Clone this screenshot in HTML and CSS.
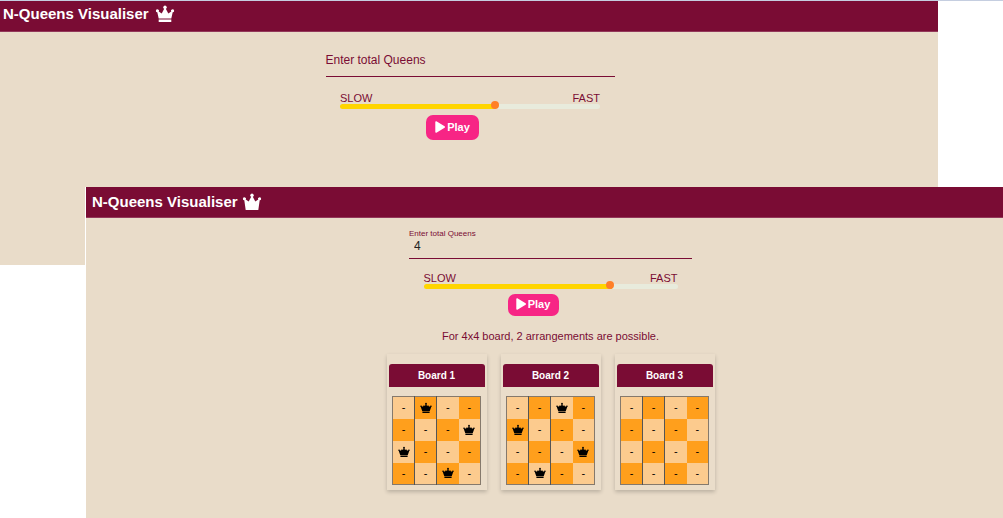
FILE: index.html
```html
<!DOCTYPE html>
<html lang="en">
<head>
<meta charset="utf-8">
<title>N-Queens Visualiser</title>
<link rel="stylesheet" href="styles.css">
</head>
<body>
<svg class="symbols" aria-hidden="true">
  <symbol id="crown" viewBox="0 0 20 18">
    <path d="M3.7 13.6 2.3 7.3a1.5 1.5 0 1 1 1.4-.7l3 1.8 2.5-4.6a1.7 1.7 0 1 1 1.6 0l2.5 4.6 3-1.8a1.5 1.5 0 1 1 1.4.7l-1.4 6.3zM3.7 14.6h12.6v2.3H3.7z"/>
  </symbol>
  <symbol id="crown-solid" viewBox="0 0 20 18">
    <path d="M3.7 16.9 2.3 7.3a1.5 1.5 0 1 1 1.4-.7l3 1.8 2.5-4.6a1.7 1.7 0 1 1 1.6 0l2.5 4.6 3-1.8a1.5 1.5 0 1 1 1.4.7l-1.4 9.6z"/>
  </symbol>
  <symbol id="queen" viewBox="0 0 12 12">
    <path d="M2.2 8.9.8 5a.8.8 0 1 1 1-.6L3 4.6l.8-1.4 1.3.7.3-1.6a.9.9 0 1 1 1.2 0l.3 1.6 1.3-.7L9 4.6l1.2-.2a.8.8 0 1 1 1 .6L9.8 8.9zM2.4 9.5h7.2V11H2.4z"/>
  </symbol>
  <symbol id="play" viewBox="0 0 10 12"><path d="M.3 1c0-.7.6-1 1.1-.7l8.2 5c.5.3.5 1.1 0 1.4l-8.2 5c-.5.3-1.1 0-1.1-.7z"/></symbol>
</svg>
<div class="stage">
  <section class="window window-back">
    <header class="bar"><h1>N-Queens Visualiser</h1><svg class="crown"><use href="#crown"/></svg></header>
    <main class="content">
      <div class="field">
        <label for="total-a">Enter total Queens</label>
        <input id="total-a" type="text">
      </div>
      <div class="speed">
        <div class="ends"><label for="speed-a">SLOW</label><span>FAST</span></div>
        <input id="speed-a" type="range" min="0" max="100" value="60" style="--fill:60%">
      </div>
      <button class="play" type="button"><svg><use href="#play"/></svg>Play</button>
    </main>
  </section>
  <section class="window window-front">
    <header class="bar"><h1>N-Queens Visualiser</h1><svg class="crown"><use href="#crown-solid"/></svg></header>
    <main class="content">
      <div class="field filled">
        <label for="total-b">Enter total Queens</label>
        <input id="total-b" type="text" value="4">
      </div>
      <div class="speed">
        <div class="ends"><label for="speed-b">SLOW</label><span>FAST</span></div>
        <input id="speed-b" type="range" min="0" max="100" value="74" style="--fill:74%">
      </div>
      <button class="play" type="button"><svg><use href="#play"/></svg>Play</button>
      <p class="message">For 4x4 board, 2 arrangements are possible.</p>
      <div class="boards">
        <article class="card"><h2>Board 1</h2>
          <table>
            <tr><td>-</td><td><svg><use href="#queen"/></svg></td><td>-</td><td>-</td></tr>
            <tr><td>-</td><td>-</td><td>-</td><td><svg><use href="#queen"/></svg></td></tr>
            <tr><td><svg><use href="#queen"/></svg></td><td>-</td><td>-</td><td>-</td></tr>
            <tr><td>-</td><td>-</td><td><svg><use href="#queen"/></svg></td><td>-</td></tr>
          </table>
        </article>
        <article class="card"><h2>Board 2</h2>
          <table>
            <tr><td>-</td><td>-</td><td><svg><use href="#queen"/></svg></td><td>-</td></tr>
            <tr><td><svg><use href="#queen"/></svg></td><td>-</td><td>-</td><td>-</td></tr>
            <tr><td>-</td><td>-</td><td>-</td><td><svg><use href="#queen"/></svg></td></tr>
            <tr><td>-</td><td><svg><use href="#queen"/></svg></td><td>-</td><td>-</td></tr>
          </table>
        </article>
        <article class="card"><h2>Board 3</h2>
          <table>
            <tr><td>-</td><td>-</td><td>-</td><td>-</td></tr>
            <tr><td>-</td><td>-</td><td>-</td><td>-</td></tr>
            <tr><td>-</td><td>-</td><td>-</td><td>-</td></tr>
            <tr><td>-</td><td>-</td><td>-</td><td>-</td></tr>
          </table>
        </article>
      </div>
    </main>
  </section>
</div>
</body>
</html>
```
FILE: styles.css
```css
* { box-sizing: border-box; }
body {
  margin: 0;
  background: #fff;
  color: #7a0c34;
  font-family: "Liberation Sans", Arial, sans-serif;
}
h1, h2, p { margin: 0; }
svg { fill: currentColor; }
.symbols { position: absolute; width: 0; height: 0; }

/* Two overlapping windows share one grid cell */
.stage {
  display: grid;
  min-height: 100vh;
  border-top: 1px solid #c5cee0;
}
.window { grid-area: 1 / 1; background: #e9dcc9; }
.window-back { margin-right: 65px; min-height: 264px; align-self: start; }
.window-front {
  margin: 186px 0 0 85px;
  border-left: 1px solid #fff;
}

.bar {
  display: flex;
  align-items: center;
  gap: 6px;
  height: 31px;
  padding: 0 3px 4px;
  background: #7a0c34;
  border-bottom: 1px solid #93385a;
  color: #fff;
}
.bar h1 { font-size: 15px; line-height: 20px; }
.crown { width: 20px; height: 18px; }
.window-front .bar { gap: 4px; padding: 0 6px 1px; }

.content {
  display: flex;
  flex-direction: column;
  align-items: center;
  padding: 11px 0 28px 2px;
}
.window-front .content { padding: 9px 0 28px 12px; }

.field {
  display: grid;
  width: 289px;
  height: 34px;
  border-bottom: 1px solid #7a0c34;
}
.field label, .field input { grid-area: 1 / 1; }
.field label { align-self: center; font-size: 12px; line-height: 16px; }
.field input {
  min-width: 0;
  padding: 0 5px;
  border: 0;
  outline: 0;
  background: none;
  color: #222;
  font: 12px "Liberation Sans", Arial, sans-serif;
}
.field.filled { height: 32px; }
.field.filled label { align-self: start; font-size: 8px; line-height: 13px; }
.field.filled input { padding-top: 6px; }

.speed { width: 260px; margin: 16px 0 6px; }
.ends {
  display: flex;
  justify-content: space-between;
  font-size: 11px;
  line-height: 11px;
}
.speed input {
  display: block;
  width: 100%;
  height: 5px;
  margin: 0;
  appearance: none;
  border-radius: 3px;
  background: linear-gradient(to right, #ffd500 var(--fill), #e8ebdc var(--fill));
}
.speed input::-webkit-slider-thumb {
  appearance: none;
  width: 8px;
  height: 8px;
  margin-top: -3px;
  border-radius: 50%;
  background: #ff7f27;
}
.window-front .field { width: 283px; }
.window-front .speed { width: 254px; margin: 14px 0 5px; }

.play {
  display: flex;
  align-items: center;
  justify-content: center;
  gap: 2px;
  width: 53px;
  height: 25px;
  margin-right: 35px;
  padding: 0 0 2px;
  border: 0;
  border-radius: 7px;
  background: #f72585;
  color: #fff;
  font: bold 11px "Liberation Sans", Arial, sans-serif;
}
.play svg { width: 10px; height: 12px; }
.window-front .play { width: 51px; height: 22px; }

.message { margin: 13px 0 11px; font-size: 11px; line-height: 14px; }

.boards { display: flex; gap: 14px; }
.card {
  width: 100px;
  padding: 10px 2px 5px;
  background: #eaddca;
  box-shadow: 0 2px 4px rgba(0, 0, 0, .2);
}
.card h2 {
  margin-bottom: 9px;
  border-radius: 3px 3px 0 0;
  background: #7a0c34;
  color: #fff;
  font-size: 10px;
  line-height: 23px;
  text-align: center;
}
.card table {
  width: 89px;
  margin: 0 auto;
  border-collapse: collapse;
  border: 1px solid #85796c;
  color: #000;
}
.card td {
  width: 22px;
  height: 22px;
  padding: 0;
  background: #fccb8e;
  font-size: 11px;
  line-height: 11px;
  text-align: center;
}
.card td:nth-child(2), .card td:nth-child(3) { border-left: 1px solid #555; }
.card tr:nth-child(odd) td:nth-child(even),
.card tr:nth-child(even) td:nth-child(odd) { background: #ff9f1c; }
.card td svg { display: block; width: 12px; height: 12px; margin: 0 auto; }
```
